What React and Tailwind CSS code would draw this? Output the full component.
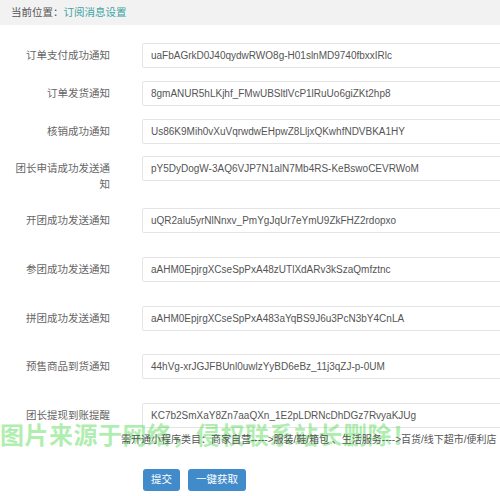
import React from "react";

const rows = [
  { label: "订单支付成功通知", value: "uaFbAGrkD0J40qydwRWO8g-H01slnMD9740fbxxIRlc", h: "h-[38px]" },
  { label: "订单发货通知", value: "8gmANUR5hLKjhf_FMwUBSltlVcP1lRuUo6giZKt2hp8", h: "h-[38px]" },
  { label: "核销成功通知", value: "Us86K9Mih0vXuVqrwdwEHpwZ8LljxQKwhfNDVBKA1HY", h: "h-[37px]" },
  { label: "团长申请成功发送通知", value: "pY5DyDogW-3AQ6VJP7N1alN7Mb4RS-KeBswoCEVRWoM", h: "h-[52px]" },
  { label: "开团成功发送通知", value: "uQR2alu5yrNlNnxv_PmYgJqUr7eYmU9ZkFHZ2rdopxo", h: "h-[49px]" },
  { label: "参团成功发送通知", value: "aAHM0EpjrgXCseSpPxA48zUTlXdARv3kSzaQmfztnc", h: "h-[49px]" },
  { label: "拼团成功发送通知", value: "aAHM0EpjrgXCseSpPxA483aYqBS9J6u3PcN3bY4CnLA", h: "h-[48px]" },
  { label: "预售商品到货通知", value: "44hVg-xrJGJFBUnl0uwlzYyBD6eBz_11j3qZJ-p-0UM", h: "h-[49px]" },
  { label: "团长提现到账提醒", value: "KC7b2SmXaY8Zn7aaQXn_1E2pLDRNcDhDGz7RvyaKJUg", h: "h-[28px]" },
];

export default function App() {
  return (
    <div
      className="relative w-[500px] h-[496px] overflow-hidden bg-white text-[#666]"
      style={{ fontFamily: '"Liberation Sans", "Noto Sans CJK SC", sans-serif' }}
    >
      <div className="h-[25px] bg-[#f2f2f2] flex items-center pl-[11px] text-[10.5px]">
        <span className="text-[#555]">当前位置：</span>
        <span className="text-[#3ea3a3]">订阅消息设置</span>
      </div>

      <div className="pt-[18px] flex flex-col">
        {rows.map((r) => (
          <div key={r.label} className={`flex items-start ${r.h}`}>
            <div className="w-[96px] shrink-0 ml-[14px] text-right text-[10.5px] leading-[16px] pt-[4px] text-[#666]">
              {r.label}
            </div>
            <div className="ml-[32px] w-[380px] h-[25px] shrink-0 border border-[#e4e4e4] rounded-[2px] flex items-center pl-[8px] text-[10px] text-[#555] whitespace-nowrap">
              {r.value}
            </div>
          </div>
        ))}
      </div>

      <div
        className="absolute left-[0px] top-[419px] text-[24px] font-bold leading-[30px] tracking-[0.5px] whitespace-nowrap text-[rgba(60,215,60,0.42)]"
        style={{ fontFamily: '"Noto Sans CJK SC", sans-serif' }}
      >
        图片来源于网络，侵权联系站长删除！
      </div>

      <div className="relative mt-[2px] pl-[121px] text-[10px] leading-[14px] whitespace-nowrap text-[#555]">
        需开通小程序类目：商家自营-----&gt;服装/鞋/箱包 、生活服务----&gt;百货/线下超市/便利店
      </div>

      <div className="flex gap-[8px] pl-[143px] mt-[22px]">
        <button className="h-[22px] w-[37px] rounded-[3px] bg-[#428bca] text-white text-[10.5px] flex items-center justify-center">
          提交
        </button>
        <button className="h-[22px] w-[58px] rounded-[3px] bg-[#428bca] text-white text-[10.5px] flex items-center justify-center">
          一键获取
        </button>
      </div>
    </div>
  );
}
